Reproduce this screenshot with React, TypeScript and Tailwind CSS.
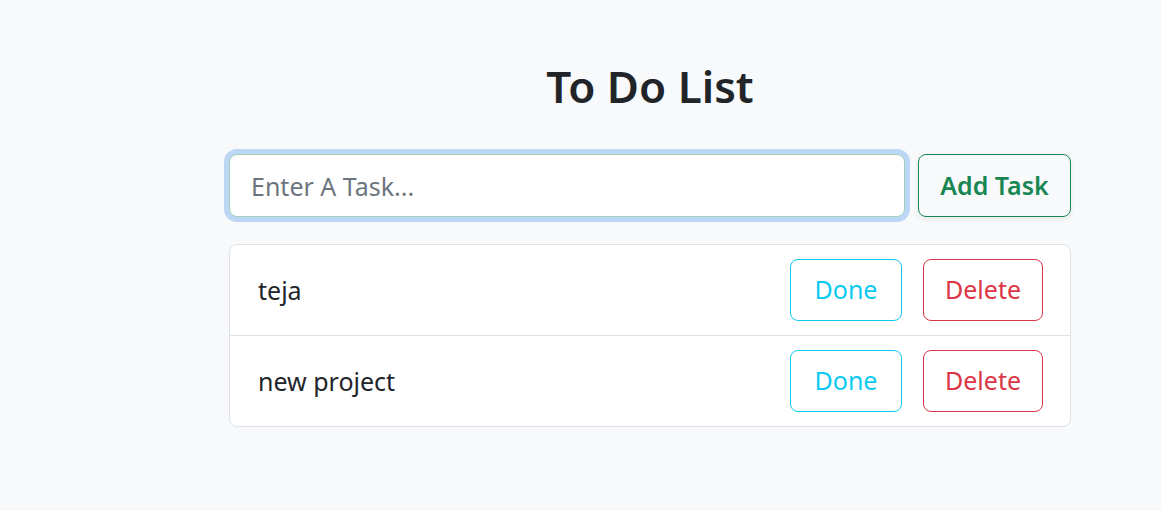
import { useState } from "react";

type Task = { id: number; text: string; done: boolean };

const initialTasks: Task[] = [
	{ id: 1, text: "teja", done: false },
	{ id: 2, text: "new project", done: false },
];

const font = { fontFamily: '"Segoe UI", "Noto Sans", "Open Sans", sans-serif' };

export default function App() {
	const [tasks, setTasks] = useState<Task[]>(initialTasks);
	const [value, setValue] = useState("");

	const addTask = () => {
		if (!value.trim()) return;
		setTasks([...tasks, { id: Date.now(), text: value.trim(), done: false }]);
		setValue("");
	};

	return (
		<div
			className="min-h-screen bg-[#f8f9fa] text-[#212529] pt-[56px] pl-[229px]"
			style={font}
		>
			<div className="w-[842px]">
				<h1 className="text-center text-[44px] font-semibold leading-[60px] mb-[38px]">
					To Do List
				</h1>

				{/* input + add button */}
				<div className="flex items-center gap-[13px]">
					<input
						type="text"
						autoFocus
						value={value}
						onChange={(e) => setValue(e.target.value)}
						placeholder="Enter A Task..."
						className="flex-1 h-[63px] rounded-[8px] border border-[#a3cfbb] bg-white px-[21px] text-[25px] text-[#212529] placeholder:text-[#6c757d] outline-none ring-[5px] ring-[#bcd6f5]"
					/>
					<button
						onClick={addTask}
						className="w-[153px] h-[63px] rounded-[8px] border border-[#198754] bg-[#f8f9fa] text-[25px] font-semibold text-[#198754] shadow-[0_2px_6px_rgba(0,0,0,0.08)]"
					>
						Add Task
					</button>
				</div>

				{/* task list */}
				<ul className="mt-[27px] rounded-[8px] border border-[#dee2e6] bg-white">
					{tasks.map((task, i) => (
						<li
							key={task.id}
							className={`flex items-center h-[90px] pl-[28px] pr-[27px] ${
								i > 0 ? "border-t border-[#dee2e6] h-[91px]" : ""
							}`}
						>
							<span
								className={`flex-1 pt-[2px] text-[25px] ${task.done ? "line-through text-[#6c757d]" : ""}`}
							>
								{task.text}
							</span>
							<button
								onClick={() =>
									setTasks(tasks.map((t) => (t.id === task.id ? { ...t, done: !t.done } : t)))
								}
								className="w-[112px] h-[62px] rounded-[8px] border border-[#0dcaf0] text-[25px] text-[#0dcaf0]"
							>
								Done
							</button>
							<button
								onClick={() => setTasks(tasks.filter((t) => t.id !== task.id))}
								className="ml-[21px] w-[120px] h-[62px] rounded-[8px] border border-[#dc3545] text-[25px] text-[#dc3545]"
							>
								Delete
							</button>
						</li>
					))}
				</ul>
			</div>
		</div>
	);
}
